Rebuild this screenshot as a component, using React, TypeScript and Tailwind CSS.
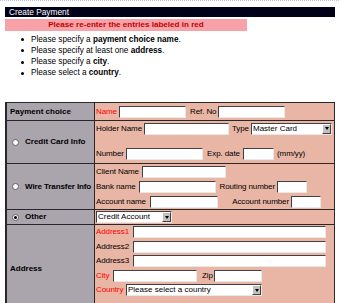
import React from "react";

const Inp = ({ w }: { w: string }) => (
  <div
    className={`${w} h-[12px] shrink-0 bg-white border-t border-l border-b border-r border-t-[#404040] border-l-[#404040] border-b-[#e8e8e8] border-r-[#e8e8e8]`}
  />
);

const Sel = ({ w, text }: { w: string; text: string }) => (
  <div
    className={`${w} h-[12px] shrink-0 bg-white flex items-stretch border-t border-l border-b border-r border-t-[#404040] border-l-[#404040] border-b-[#e8e8e8] border-r-[#e8e8e8]`}
  >
    <div className="flex-1 pl-[1px] flex items-center text-black whitespace-nowrap overflow-hidden">{text}</div>
    <div className="w-[9px] bg-[#c0c0c0] border-t border-l border-t-white border-l-white border-b border-r border-b-[#404040] border-r-[#404040] flex items-center justify-center">
      <div className="w-0 h-0 border-l-[2.5px] border-r-[2.5px] border-t-[3px] border-l-transparent border-r-transparent border-t-black" />
    </div>
  </div>
);

const Radio = ({ on }: { on?: boolean }) => (
  <div className="w-[7px] h-[7px] rounded-full bg-white border border-[#606060] flex items-center justify-center shrink-0">
    {on && <div className="w-[3px] h-[3px] rounded-full bg-black" />}
  </div>
);

const L = ({ w, children, red, right, cls }: { w: string; children: React.ReactNode; red?: boolean; right?: boolean; cls?: string }) => (
  <div className={`${w} shrink-0 whitespace-nowrap tracking-[-0.1px] ${red ? "text-[#ff0000]" : "text-black"} ${right ? "text-right pr-[2px]" : ""} ${cls ?? ""}`}>
    {children}
  </div>
);

export default function App() {
  return (
    <div className="w-[339px] h-[303px] overflow-hidden bg-white font-['Liberation_Sans',Arial,sans-serif] text-[8px] leading-none text-black">
      <div className="h-px border-t border-dotted border-[#c4bce4]" />
      <div className="mt-[6px] ml-[5px] w-[330px] h-[10px] bg-[#000018] text-white text-[8.3px] pl-[4px] flex items-center">
        Create Payment
      </div>
      <div className="mt-[2px] ml-[5px] w-[242px] h-[12px] bg-[#f7a2a8] text-[#c00000] text-[8.1px] font-bold flex items-center justify-center">
        Please re-enter the entries labeled in red
      </div>
      <ul className="mt-[3px] ml-[21px] text-[8.2px]">
        {[
          <>Please specify a <b>payment choice name</b>.</>,
          <>Please specify at least one <b>address</b>.</>,
          <>Please specify a <b>city</b>.</>,
          <>Please select a <b>country</b>.</>,
        ].map((t, i) => (
          <li key={i} className="h-[11.3px] flex items-center">
            <span className="w-[3px] h-[3px] rounded-full bg-black mr-[7px]" />
            <span>{t}</span>
          </li>
        ))}
      </ul>

      <div className="mt-[23px] ml-[5px] w-[330px] border-t border-l-2 border-r border-[#282828]">
        {/* Row 1 */}
        <div className="flex h-[18px] border-b border-[#282828]">
          <div className="w-[88px] bg-[#aaa4ac] border-r border-[#282828] flex items-center pl-[3px] font-bold">Payment choice</div>
          <div className="flex-1 bg-[#e9b5a5] flex items-center pl-[1px]">
            <L w="w-[23px]" red>Name</L>
            <Inp w="w-[67px]" />
            <L w="w-[32px]" cls="pl-[4px]">Ref. No</L>
            <Inp w="w-[67px]" />
          </div>
        </div>
        {/* Row 2 */}
        <div className="flex h-[43px] border-b border-[#282828]">
          <div className="w-[88px] bg-[#aaa4ac] border-r border-[#282828] flex items-center pl-[5px] font-bold">
            <Radio />
            <span className="ml-[6px] whitespace-nowrap">Credit Card Info</span>
          </div>
          <div className="flex-1 bg-[#e9b5a5] flex flex-col pl-[1px]">
            <div className="flex items-center mt-[1px] h-[13px]">
              <L w="w-[48px]">Holder Name</L>
              <Inp w="w-[85px]" />
              <L w="w-[22px]" cls="pl-[3px]">Type</L>
              <Sel w="w-[81px]" text="Master Card" />
            </div>
            <div className="flex items-center mt-[12px] h-[13px]">
              <L w="w-[30px]">Number</L>
              <Inp w="w-[77px]" />
              <L w="w-[40px]" cls="pl-[4px]">Exp. date</L>
              <Inp w="w-[31px]" />
              <L w="w-[40px]" cls="pl-[3px]">(mm/yy)</L>
            </div>
          </div>
        </div>
        {/* Row 3 */}
        <div className="flex h-[46px] border-b border-[#282828]">
          <div className="w-[88px] bg-[#aaa4ac] border-r border-[#282828] flex items-center pl-[5px] font-bold">
            <Radio />
            <span className="ml-[6px] whitespace-nowrap tracking-[-0.1px]">Wire Transfer Info</span>
          </div>
          <div className="flex-1 bg-[#e9b5a5] flex flex-col pl-[1px]">
            <div className="flex items-center mt-[1px] h-[13px]">
              <L w="w-[46px]">Client Name</L>
              <Inp w="w-[84px]" />
            </div>
            <div className="flex items-center mt-[2px] h-[13px]">
              <L w="w-[43px]">Bank name</L>
              <Inp w="w-[77px]" />
              <L w="w-[61px]" right>Routing number</L>
              <Inp w="w-[30px]" />
            </div>
            <div className="flex items-center mt-[2px] h-[13px]">
              <L w="w-[54px]">Account name</L>
              <Inp w="w-[68px]" />
              <L w="w-[73px]" right>Account number</L>
              <Inp w="w-[30px]" />
            </div>
          </div>
        </div>
        {/* Row 4 */}
        <div className="flex h-[15px] border-b border-[#282828]">
          <div className="w-[88px] bg-[#aaa4ac] border-r border-[#282828] flex items-center pl-[5px] font-bold">
            <Radio on />
            <span className="ml-[6px]">Other</span>
          </div>
          <div className="flex-1 bg-[#e9b5a5] flex items-center pl-[1px]">
            <Sel w="w-[76px]" text="Credit Account" />
          </div>
        </div>
        {/* Row 5 */}
        <div className="flex h-[88px]">
          <div className="w-[88px] bg-[#aaa4ac] border-r border-[#282828] flex items-center pl-[3px] font-bold">Address</div>
          <div className="flex-1 bg-[#e9b5a5] flex flex-col pl-[1px] pt-[1px] gap-[2.5px]">
            <div className="flex items-center h-[12px]">
              <L w="w-[37px]" red>Address1</L>
              <Inp w="w-[193px]" />
            </div>
            <div className="flex items-center h-[12px]">
              <L w="w-[37px]">Address2</L>
              <Inp w="w-[193px]" />
            </div>
            <div className="flex items-center h-[12px]">
              <L w="w-[37px]">Address3</L>
              <Inp w="w-[193px]" />
            </div>
            <div className="flex items-center h-[12px]">
              <L w="w-[17px]" red>City</L>
              <Inp w="w-[84px]" />
              <L w="w-[17px]" cls="pl-[5px]">Zip</L>
              <Inp w="w-[48px]" />
            </div>
            <div className="flex items-center h-[12px]">
              <L w="w-[30px]" red>Country</L>
              <Sel w="w-[136px]" text="Please select a country" />
            </div>
          </div>
        </div>
      </div>
    </div>
  );
}
